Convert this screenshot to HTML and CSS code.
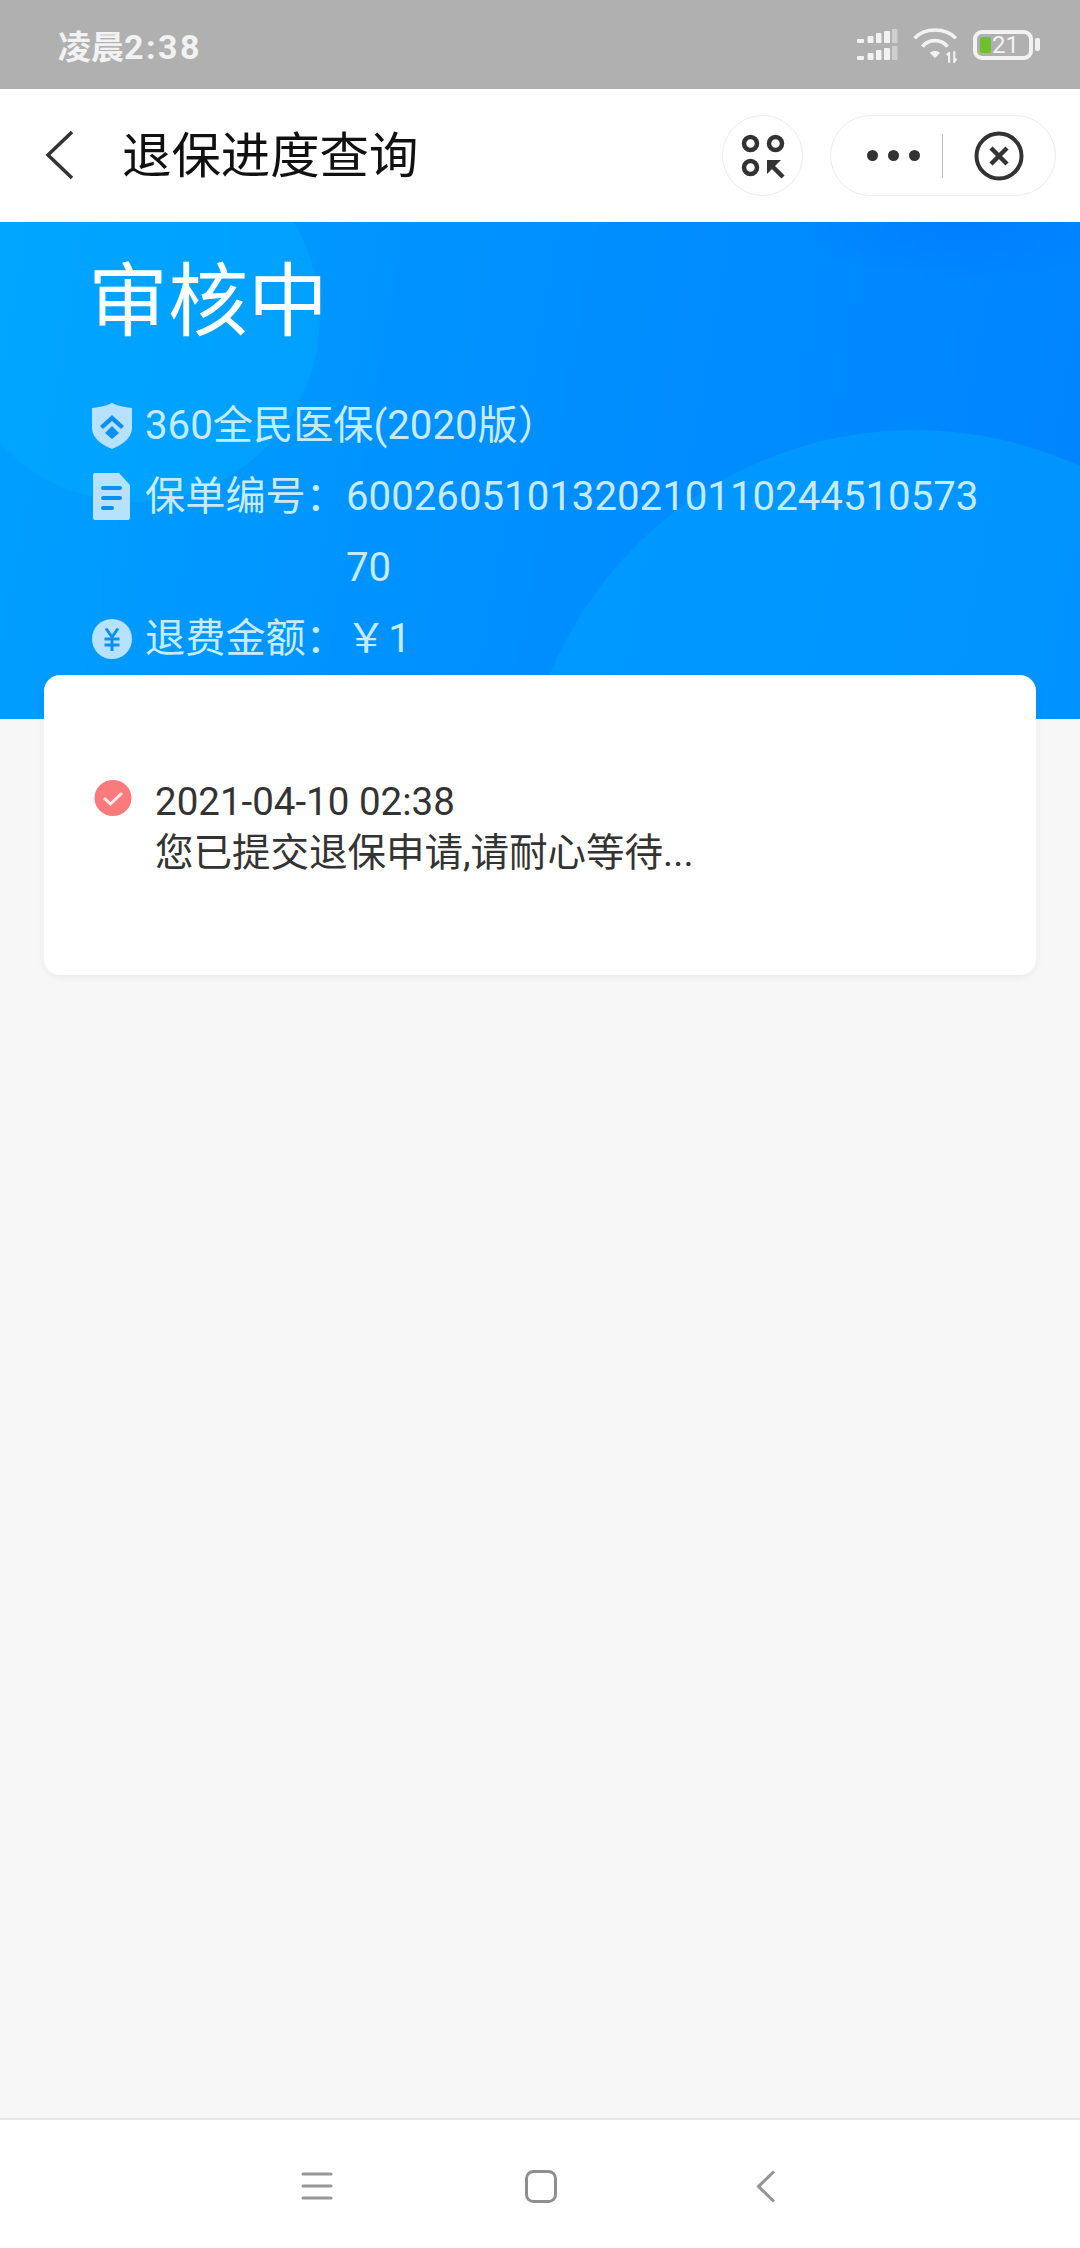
FILE: index.html
```html
<!DOCTYPE html>
<html lang="zh">
<head>
<meta charset="utf-8">
<title>退保进度查询</title>
<link rel="stylesheet" href="styles.css">
</head>
<body>
<div class="status">
  <span class="time">凌晨<span class="time-num">2:38</span></span>
  <div class="status-icons">
    <svg class="ic-signal" width="42" height="32" viewBox="0 0 42 32"><g fill="#f2f2f2"><rect x="0" y="10" width="7" height="4" rx="1"/><rect x="10.500" y="7" width="6" height="7" rx="1"/><rect x="19" y="4" width="5.500" height="10" rx="1"/><rect x="27" y="2" width="6" height="12" rx="1"/><rect x="0" y="27" width="7" height="4" rx="1"/><rect x="10.500" y="24" width="6" height="7" rx="1"/><rect x="19" y="21" width="5.500" height="10" rx="1"/><rect x="27" y="19" width="6" height="12" rx="1"/></g><g fill="#cfcfcf"><rect x="35" y="0" width="5.500" height="14" rx="1"/><rect x="35" y="17" width="5.500" height="14" rx="1"/></g></svg>
    <svg class="ic-wifi" width="46" height="36" viewBox="0 0 44 34"><g fill="none" stroke="#f2f2f2" stroke-width="3.500"><path d="M1.500 10.500C11 0 31 0 41 10.500"/><path d="M9 18.500C15 11 27 11 33 18.500"/></g><path d="M16 24.500C19 22 23 22 26 24.500L21 29.500Z" fill="#f2f2f2"/><path d="M34.500 24V34M32.500 27L34.500 24M39.500 23V33L41.500 30" fill="none" stroke="#f2f2f2" stroke-width="2"/></svg>
    <div class="battery"><span class="batt-level"></span><span class="batt-num">21</span><span class="batt-nub"></span></div>
  </div>
</div>

<header class="nav">
  <svg class="back" width="30" height="50" viewBox="0 0 30 50"><path d="M28 2L4 25L28 48" fill="none" stroke="#333" stroke-width="3.500"/></svg>
  <h1 class="nav-title">退保进度查询</h1>
  <div class="round-btn">
    <svg width="44" height="46" viewBox="0 0 44 46"><g fill="none" stroke="#333" stroke-width="4.500"><circle cx="9.500" cy="10.500" r="6.500"/><circle cx="34.500" cy="10.500" r="6.500"/><circle cx="9.500" cy="34.500" r="6.500"/></g><path d="M30 32L42 44" stroke="#333" stroke-width="4.500" fill="none"/><path d="M26 27H40L26 41Z" fill="#333"/></svg>
  </div>
  <div class="capsule">
    <div class="dots"><i></i><i></i><i></i></div>
    <span class="divider"></span>
    <svg class="close" width="50" height="50" viewBox="0 0 50 50"><circle cx="25" cy="25" r="22.500" fill="none" stroke="#333" stroke-width="4"/><path d="M17 17L33 33M33 17L17 33" stroke="#333" stroke-width="4.500" fill="none"/></svg>
  </div>
</header>

<section class="hero">
  <svg class="hero-bg" width="1080" height="497" viewBox="0 0 1080 497"><defs><radialGradient id="corner"><stop offset="0" stop-color="#0076ff" stop-opacity=".6"/><stop offset="1" stop-color="#0076ff" stop-opacity="0"/></radialGradient></defs><circle cx="135" cy="95" r="185" fill="#00aeff" fill-opacity=".4"/><circle cx="915" cy="603" r="395" fill="#00aaff" fill-opacity=".42"/><ellipse cx="960" cy="0" rx="170" ry="60" fill="url(#corner)"/></svg>
  <h2 class="hero-title">审核中</h2>
  <div class="row">
    <svg class="row-icon" width="40" height="46" viewBox="0 0 40 46"><path d="M20 0C26 3 32 4 40 5V25C40 35 30 42 20 46C10 42 0 35 0 25V5C8 4 14 3 20 0Z" fill="#b7e2ff"/><path d="M20 12L32 23L29 26L20 18L11 26L8 23Z" fill="#0a90f5"/><path d="M20 23L27 30L20 36L13 30Z" fill="#0a90f5"/></svg>
    <span class="row-text">360全民医保(2020版）</span>
  </div>
  <div class="row row-wrap">
    <svg class="row-icon" width="38" height="47" viewBox="0 0 38 47"><path d="M2 0H26L37 12V45Q37 47 35 47H2Q0 47 0 45V2Q0 0 2 0Z" fill="#b7e2ff"/><g fill="#0a90f5"><rect x="8" y="13" width="21" height="4" rx="2"/><rect x="8" y="23" width="21" height="4" rx="2"/><rect x="8" y="33" width="13" height="4" rx="2"/></g></svg>
    <span class="row-label">保单编号：</span>
    <span class="row-value">600260510132021011024451057370</span>
  </div>
  <div class="row">
    <svg class="row-icon" width="40" height="40" viewBox="0 0 40 40"><circle cx="20" cy="20" r="20" fill="#b7e2ff"/><path d="M14 9.500L20 18L26 9.500M12.500 20H27.500M12.500 26H27.500M20 18V32" fill="none" stroke="#0a90f5" stroke-width="3"/></svg>
    <span class="row-label">退费金额：</span>
    <span class="row-value row-amount">￥1</span>
  </div>
</section>

<main class="content">
  <article class="card">
    <svg class="check" width="38" height="36" viewBox="0 0 38 36"><ellipse cx="19" cy="18" rx="18.500" ry="18" fill="#fb7a7c"/><path d="M10 18L16.500 24L28 13" fill="none" stroke="#ffeaea" stroke-width="3"/></svg>
    <div class="log">
      <div>2021-04-10 02:38</div>
      <div>您已提交退保申请,请耐心等待...</div>
    </div>
  </article>
</main>

<footer class="sysbar">
  <svg width="32" height="28" viewBox="0 0 32 28"><g stroke="#979797" stroke-width="3" stroke-linecap="round"><path d="M2 2H30M2 14H30M2 26H30"/></g></svg>
  <svg width="32" height="33" viewBox="0 0 32 33"><rect x="1.500" y="1.500" width="29" height="30" rx="7" fill="none" stroke="#8f8f8f" stroke-width="3"/></svg>
  <svg width="20" height="33" viewBox="0 0 20 33"><path d="M18 1.500L2.500 16.500L18 31.500" fill="none" stroke="#949494" stroke-width="3"/></svg>
</footer>
</body>
</html>
```

FILE: styles.css
```css
* { box-sizing: border-box; }
html, body { margin: 0; padding: 0; }
body {
  width: 1080px;
  height: 2248px;
  display: flex;
  flex-direction: column;
  font-family: Roboto, "Noto Sans CJK SC", sans-serif;
  background: #f7f7f7;
  overflow: hidden;
}
.status {
  height: 89px;
  background: #b0b0b0;
  display: flex;
  align-items: center;
  justify-content: space-between;
  padding: 0 38px 0 58px;
  flex: none;
}
.time { color: #f2f2f2; font-size: 33px; font-weight: 700; }
.time-num { font-size: 34px; letter-spacing: 2.500px; }
.status-icons { display: flex; align-items: center; gap: 14px; }
.battery {
  position: relative;
  width: 60px;
  height: 30px;
  border: 4px solid #f2f2f2;
  border-radius: 9px;
  margin-right: 9px;
  display: flex;
  align-items: center;
  padding-left: 3px;
}
.batt-level { width: 11px; height: 16px; background: #6fc02c; border-radius: 2px; flex: none; }
.batt-num { color: #f2f2f2; font-size: 24px; line-height: 22px; margin-left: 1px; }
.batt-nub {
  position: absolute;
  right: -11px;
  top: 4px;
  width: 5px;
  height: 13px;
  border-radius: 2px;
  background: #f2f2f2;
}
.nav {
  height: 133px;
  background: #fff;
  display: flex;
  align-items: center;
  padding: 0 24px 0 44px;
  flex: none;
}
.back { flex: none; margin-bottom: 2px; }
.nav-title {
  margin: 0 0 8px 48px;
  font-size: 49.400px;
  font-weight: 400;
  color: #111;
  flex: 1;
  white-space: nowrap;
}
.round-btn {
  width: 81px;
  height: 81px;
  border: 1px solid #ececec;
  border-radius: 50%;
  display: flex;
  align-items: center;
  justify-content: center;
  margin-right: 27px;
  flex: none;
}
.capsule {
  width: 226px;
  height: 81px;
  border: 1px solid #ececec;
  border-radius: 41px;
  display: flex;
  align-items: center;
  padding-left: 36px;
  flex: none;
}
.dots { display: flex; gap: 10px; width: 75px; }
.dots i { width: 11px; height: 11px; border-radius: 50%; background: #333; }
.divider { width: 1px; height: 44px; background: #bdbdbd; }
.close { margin-left: 31px; }
.hero {
  position: relative;
  height: 497px;
  flex: none;
  padding: 30px 92px 0;
  background: linear-gradient(100deg, #00a0ff 0%, #0090ff 45%, #0084ff 100%);
  color: #c6ebff;
  overflow: hidden;
}
.hero-bg { position: absolute; left: 0; top: 0; }
.hero-title {
  position: relative;
  margin: 0 0 38px -4px;
  height: 100px;
  font-size: 80px;
  line-height: 100px;
  font-weight: 400;
  color: #fff;
}
.row {
  position: relative;
  display: flex;
  align-items: center;
  font-size: 40.200px;
  line-height: 71px;
  min-height: 71px;
}
.row-wrap { align-items: flex-start; }
.row-wrap .row-icon { margin-top: 12px; }
.row-icon { flex: none; width: 40px; margin-right: 13px; }
.row-label { width: 201px; flex: none; white-space: nowrap; }
.row-value { width: 640px; flex: none; word-break: break-all; }
.row-amount { letter-spacing: 2px; }
.row-text { white-space: nowrap; }
.content { flex: 1; padding: 0 44px; }
.card {
  position: relative;
  margin-top: -44px;
  height: 300px;
  padding: 101px 0 0 50px;
  background: #fff;
  border-radius: 16px;
  box-shadow: 0 2px 8px rgba(0, 0, 0, .06);
  display: flex;
  align-items: flex-start;
  gap: 23px;
}
.check { flex: none; margin-top: 4px; }
.log { font-size: 38.500px; line-height: 51px; color: #333; }
.sysbar {
  position: relative;
  height: 130px;
  flex: none;
  background: #fff;
  border-top: 2px solid #e6e6e6;
  display: grid;
  grid-template-columns: 32px 32px 20px;
  justify-content: start;
  column-gap: 192px;
  align-items: center;
  padding: 4px 0 0 301px;
}
.sysbar svg:nth-child(3) { margin-left: 7px; }
```
